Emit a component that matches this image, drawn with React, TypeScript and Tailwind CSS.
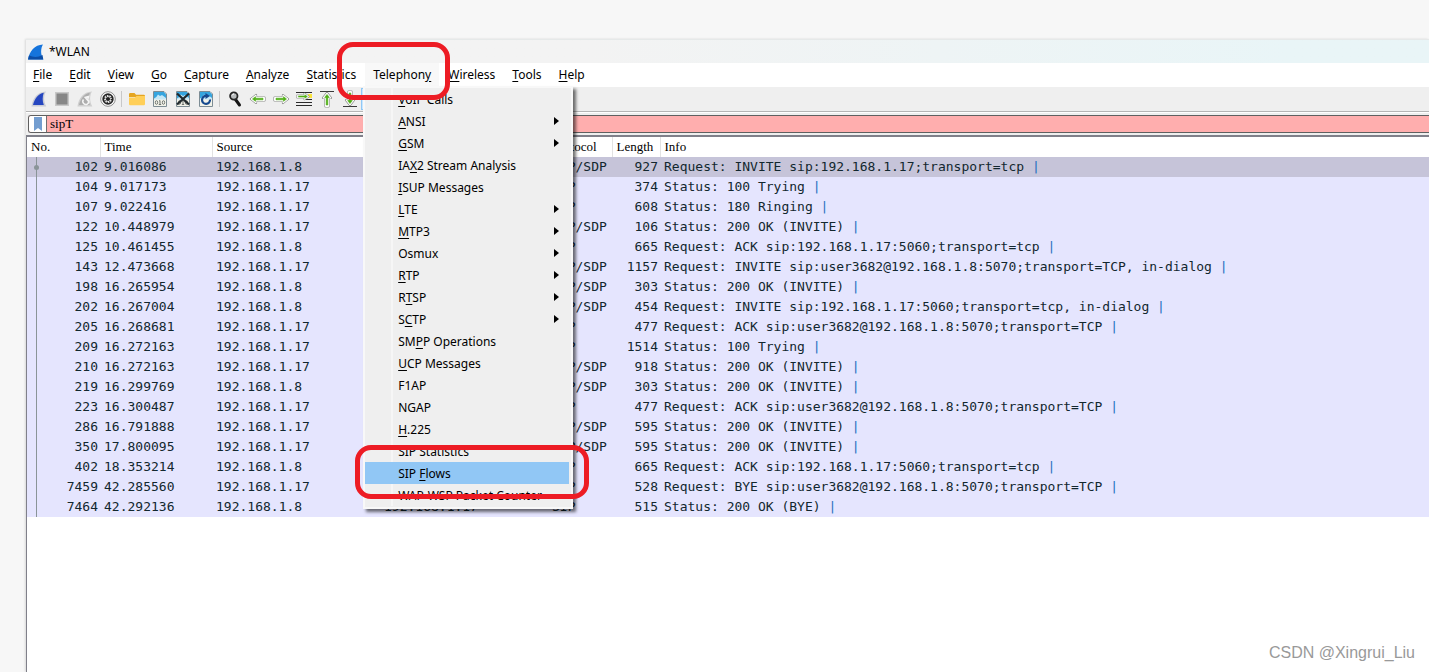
import { ReactNode } from "react";

const menus = [
  "&File",
  "&Edit",
  "&View",
  "&Go",
  "&Capture",
  "&Analyze",
  "&Statistics",
  "Telephon&y",
  "&Wireless",
  "&Tools",
  "&Help",
];

const telephonyItems = [
  { label: "&VoIP Calls" },
  { label: "&ANSI", submenu: true },
  { label: "&GSM", submenu: true },
  { label: "IA&X2 Stream Analysis" },
  { label: "&ISUP Messages" },
  { label: "&LTE", submenu: true },
  { label: "&MTP3", submenu: true },
  { label: "Osmux", submenu: true },
  { label: "&RTP", submenu: true },
  { label: "R&TSP", submenu: true },
  { label: "S&CTP", submenu: true },
  { label: "SM&PP Operations" },
  { label: "&UCP Messages" },
  { label: "F1AP" },
  { label: "NGAP" },
  { label: "&H.225" },
  { label: "SIP Statistics" },
  { label: "SIP &Flows", active: true },
  { label: "WAP-WSP Packet Counter" },
];

const A = "192.168.1.8";
const B = "192.168.1.17";

const packets = [
  [102, "9.016086", A, B, "SIP/SDP", 927, "Request: INVITE sip:192.168.1.17;transport=tcp"],
  [104, "9.017173", B, A, "SIP", 374, "Status: 100 Trying"],
  [107, "9.022416", B, A, "SIP", 608, "Status: 180 Ringing"],
  [122, "10.448979", B, A, "SIP/SDP", 106, "Status: 200 OK (INVITE)"],
  [125, "10.461455", A, B, "SIP", 665, "Request: ACK sip:192.168.1.17:5060;transport=tcp"],
  [143, "12.473668", B, A, "SIP/SDP", 1157, "Request: INVITE sip:user3682@192.168.1.8:5070;transport=TCP, in-dialog"],
  [198, "16.265954", A, B, "SIP/SDP", 303, "Status: 200 OK (INVITE)"],
  [202, "16.267004", A, B, "SIP/SDP", 454, "Request: INVITE sip:192.168.1.17:5060;transport=tcp, in-dialog"],
  [205, "16.268681", B, A, "SIP", 477, "Request: ACK sip:user3682@192.168.1.8:5070;transport=TCP"],
  [209, "16.272163", B, A, "SIP", 1514, "Status: 100 Trying"],
  [210, "16.272163", B, A, "SIP/SDP", 918, "Status: 200 OK (INVITE)"],
  [219, "16.299769", A, B, "SIP/SDP", 303, "Status: 200 OK (INVITE)"],
  [223, "16.300487", B, A, "SIP", 477, "Request: ACK sip:user3682@192.168.1.8:5070;transport=TCP"],
  [286, "16.791888", B, A, "SIP/SDP", 595, "Status: 200 OK (INVITE)"],
  [350, "17.800095", B, A, "SIP/SDP", 595, "Status: 200 OK (INVITE)"],
  [402, "18.353214", A, B, "SIP", 665, "Request: ACK sip:192.168.1.17:5060;transport=tcp"],
  [7459, "42.285560", B, A, "SIP", 528, "Request: BYE sip:user3682@192.168.1.8:5070;transport=TCP"],
  [7464, "42.292136", A, B, "SIP", 515, "Status: 200 OK (BYE)"],
];

// "&" marks the access key, as in Qt labels
function Mnemonic({ text }: { text: string }) {
  const i = text.indexOf("&");
  if (i < 0) return <span>{text}</span>;
  return (
    <span>
      {text.slice(0, i)}
      <span className="underline underline-offset-2">{text[i + 1]}</span>
      {text.slice(i + 2)}
    </span>
  );
}

function Icon({ children }: { children: ReactNode }) {
  return (
    <svg viewBox="0 0 16 16" className="size-4 overflow-visible">
      {children}
    </svg>
  );
}

function Page({ children }: { children: ReactNode }) {
  return (
    <Icon>
      <path d="M1.500.5H12L14.500 3v12.500h-13z" fill="#f3f3ea" stroke="#7d8c94" />
      <path d="M2 1h9.800L14 3.200V8H2z" fill="#35a5df" />
      <path d="M2 7.500Q5 6 6 3.500L8 5l2-1 4 3v1.500H2z" fill="#c4e7f6" />
      {children}
    </Icon>
  );
}

function Digits() {
  return (
    <g fill="none" stroke="#6f7470" strokeWidth="1">
      <ellipse cx="4.500" cy="11.500" rx="1.200" ry="1.800" />
      <path d="M7 10.200l1-.7v4M6.800 13.500h2.400" />
      <ellipse cx="11.500" cy="11.500" rx="1.200" ry="1.800" />
    </g>
  );
}

const arrow = "M1 8l5-4v2.500h8.500v3H6V12z";
const arrowHalo = (
  <>
    <path d={arrow} fill="#fff" stroke="#8f918e" strokeWidth="2.200" strokeLinejoin="round" />
    <path d={arrow} fill="#fff" stroke="#fff" strokeWidth="1" />
    <path d="M2.500 8L5.500 5.700v1.500H13v1.600H5.500v1.500z" fill="#4fae14" stroke="#4fae14" strokeWidth=".6" />
  </>
);

const toolbar: { name: string; sep?: boolean; icon: ReactNode }[] = [
  {
    name: "Start capture",
    icon: (
      <Icon>
        <path d="M.5 15.500C1.500 7 6.500 1 15 .5c-2.500 4-2.500 10 .3 15z" fill="#c9ccd6" />
        <path d="M2 14C3.500 8 7 3 12.800 1.800c-1.500 4-1.500 8.500 0 12.200z" fill="#2546c0" />
      </Icon>
    ),
  },
  {
    name: "Stop capture",
    icon: (
      <Icon>
        <path d="M1 1h14v14H1z" fill="#c8c8c8" />
        <path d="M2.500 2.500h11v11h-11z" fill="#878787" />
      </Icon>
    ),
  },
  {
    name: "Restart capture",
    icon: (
      <Icon>
        <path d="M.5 15.500C1.500 7 6.500 1 15 .5c-2.500 4-2.500 10 .3 15z" fill="#cfcfcf" />
        <path d="M2 14C3.500 8 7 3 12.800 1.800c-1.500 4-1.500 8.500 0 12.200z" fill="#adadad" />
        <path d="M6.500 8.500a3 3 0 1 0 5 .5M11.500 5.500L8.200 6.500l2.500 2.800z" fill="none" stroke="#f4f4f4" strokeWidth="1.500" />
      </Icon>
    ),
  },
  {
    name: "Capture options",
    sep: true,
    icon: (
      <Icon>
        <circle cx="8" cy="8" r="7.300" fill="#fff" stroke="#8e8e8e" strokeWidth="1" />
        <circle cx="8" cy="8" r="4.800" fill="#e6e6e6" stroke="#262626" strokeWidth="1.800" />
        <circle cx="8" cy="8" r="3.400" fill="none" stroke="#262626" strokeWidth="1.400" strokeDasharray="1.200 1.470" />
        <circle cx="8" cy="8" r="2.100" fill="#202020" />
      </Icon>
    ),
  },
  {
    name: "Open",
    icon: (
      <Icon>
        <path d="M0 3.200Q0 2 1.200 2h4.300L7 3.700h7.800q1.200 0 1.200 1.200V6H0z" fill="#e5a520" />
        <path d="M0 6.500h6L7.500 5H16v8q0 1.200-1.200 1.200H1.200Q0 14.200 0 13z" fill="#ffcf58" />
      </Icon>
    ),
  },
  { name: "Save", icon: <Page><Digits /></Page> },
  {
    name: "Close",
    icon: (
      <Page>
        <Digits />
        <path d="M2 2.500l12 11M14 2.500l-12 11" stroke="#20282c" strokeWidth="2.300" />
      </Page>
    ),
  },
  {
    name: "Reload",
    sep: true,
    icon: (
      <Page>
        <path d="M12 8.500A4 4 0 1 1 8.500 5" fill="none" stroke="#174a8f" strokeWidth="2.200" />
        <path d="M7.500 2l4.500 3-4.500 3z" fill="#174a8f" />
      </Page>
    ),
  },
  {
    name: "Find packet",
    icon: (
      <Icon>
        <path d="M8.500 8.500l4 5.500" stroke="#161616" strokeWidth="3" strokeLinecap="round" />
        <circle cx="6.800" cy="5" r="3.700" fill="#b9bcbd" stroke="#262626" strokeWidth="1.800" />
        <path d="M5 4.500q.6-1.500 2-1.600" stroke="#fff" fill="none" />
      </Icon>
    ),
  },
  { name: "Previous packet", icon: <Icon>{arrowHalo}</Icon> },
  {
    name: "Next packet",
    icon: (
      <Icon>
        <g transform="rotate(180 8 8)">{arrowHalo}</g>
      </Icon>
    ),
  },
  {
    name: "Go to packet",
    icon: (
      <Icon>
        <path d="M0 1.500h16M0 11.500h16M0 14.500h16M9 8.500h7" stroke="#2b2b2b" />
        <path d="M12 3h4v4h-4z" fill="#fbe43b" />
        <g transform="translate(13.500 -.5) scale(-.85 .75)">{arrowHalo}</g>
      </Icon>
    ),
  },
  {
    name: "First packet",
    icon: (
      <Icon>
        <path d="M1 .5h14" stroke="#3a3a3a" />
        <g transform="translate(0 1) rotate(90 8 8)">{arrowHalo}</g>
      </Icon>
    ),
  },
  {
    name: "Last packet",
    icon: (
      <Icon>
        <path d="M1 15.500h14" stroke="#3a3a3a" />
        <g transform="translate(0 -1) rotate(-90 8 8)">{arrowHalo}</g>
      </Icon>
    ),
  },
];

function TelephonyMenu() {
  return (
    <ul className="absolute -left-[2px] top-full z-10 w-[210px] border-2 border-[#f8f8f8] bg-[#efefef] pb-px shadow-[3px_3px_3px_rgba(0,0,0,0.55)]">
      {telephonyItems.map((item) => (
        <li key={item.label}>
          <button
            className={
              item.active
                ? "flex h-[22px] w-[204px] items-center bg-[#91c7f5]"
                : "flex h-[22px] w-full items-center"
            }
          >
            <span
              className={
                item.active
                  ? "mr-[5px] h-full w-7 shrink-0"
                  : "mr-[5px] h-full w-7 shrink-0 border-r-2 border-[#f6f6f6]"
              }
            />
            <span className="pt-[2px]">
              <Mnemonic text={item.label} />
            </span>
            {item.submenu && (
              <svg viewBox="0 0 5 8" className="ml-auto mr-[12px] h-2 w-[5px]">
                <path d="M0 0l5 4-5 4z" fill="#000" />
              </svg>
            )}
          </button>
        </li>
      ))}
    </ul>
  );
}

function MenuBar() {
  return (
    <nav className="flex h-[23px] items-stretch gap-px bg-white">
      {menus.map((label) =>
        label === "Telephon&y" ? (
          <div key={label} className="relative bg-[#f8f8f8]">
            <button className="h-full px-2">
              <Mnemonic text={label} />
            </button>
            <TelephonyMenu />
          </div>
        ) : (
          <button key={label} className="px-2 first:pl-[7px]">
            <Mnemonic text={label} />
          </button>
        )
      )}
    </nav>
  );
}

function Toolbar() {
  return (
    <div className="flex h-[26px] items-center border-b border-t border-b-[#b5b5b5] border-t-white bg-[#efefef] pl-[1px]">
      {toolbar.map((tool) => (
        <div key={tool.name} className="flex items-center">
          <button aria-label={tool.name} className="flex w-[23px] justify-center">
            {tool.icon}
          </button>
          {tool.sep && <span className="mx-[2px] h-4 w-[2px] border-l border-[#c8c8c8]" />}
        </div>
      ))}
      <button aria-label="Auto scroll" className="h-[22px] w-[23px] border border-[#90c8f6] bg-[#cce8ff]" />
    </div>
  );
}

function FilterBar() {
  return (
    <div className="border-t border-white bg-[#efefef] pb-[2px] pl-[2px] pt-[2px]">
      <div className="flex h-[18px] overflow-hidden rounded-l-[3px] border-y border-l border-[#606060] bg-[#ffaeae]">
        <button
          aria-label="Filter bookmarks"
          className="flex w-[18px] shrink-0 items-center justify-center border-r border-[#707070] bg-white"
        >
          <svg viewBox="0 0 8 14" className="h-[14px] w-2">
            <path d="M0 0h8v14l-4-3-4 3z" fill="#739dd0" />
          </svg>
        </button>
        <input
          aria-label="Display filter"
          defaultValue="sipT"
          className="min-w-0 flex-1 bg-transparent pl-[3px] font-['Liberation_Serif',serif] text-[13px] text-black outline-none"
        />
      </div>
    </div>
  );
}

function PacketList() {
  const th = "border-r border-[#e2e2e2] pl-[4px] text-left font-normal";
  return (
    <table className="w-full table-fixed border-collapse font-['DejaVu_Sans_Mono',monospace] text-[13px] text-[#12272e]">
      <colgroup>
        <col className="w-[9px]" />
        <col className="w-[64px]" />
        <col className="w-[112px]" />
        <col className="w-[168px]" />
        <col className="w-[168px]" />
        <col className="w-[64px]" />
        <col className="w-[48px]" />
        <col />
      </colgroup>
      <thead>
        <tr className="h-5 bg-white font-['Liberation_Serif',serif] text-[13px] leading-5 text-black">
          <th colSpan={2} className={th}>No.</th>
          <th className={th}>Time</th>
          <th className={th}>Source</th>
          <th className={th}>Destination</th>
          <th className={th}>Protocol</th>
          <th className={th}>Length</th>
          <th className="pl-[4px] text-left font-normal">Info</th>
        </tr>
      </thead>
      <tbody>
        {packets.map(([no, time, src, dst, proto, len, info], i) => (
          <tr key={no} className={i === 0 ? "h-5 bg-[#c6c4d9]" : "h-5 bg-[#e5e5fe]"}>
            <td className="relative border-r border-[#8a9498] p-0">
              {i === 0 && (
                <span className="absolute -right-[3px] top-2 size-[5px] rounded-full bg-[#8a9498]" />
              )}
            </td>
            <td className="p-0 pr-[2px] text-right leading-5">{no}</td>
            <td className="p-0 pl-[4px] leading-5">{time}</td>
            <td className="p-0 pl-[4px] leading-5">{src}</td>
            <td className="p-0 pl-[4px] leading-5">{dst}</td>
            <td className="p-0 pl-[4px] leading-5">{proto}</td>
            <td className="p-0 pr-[2px] text-right leading-5">{len}</td>
            <td className="truncate p-0 pl-[4px] leading-5">
              {info} <span className="text-[#1f6fc0]">|</span>
            </td>
          </tr>
        ))}
      </tbody>
    </table>
  );
}

export default function App() {
  return (
    <div className="relative flex min-h-screen flex-col overflow-hidden bg-[#f7f7f7] pl-[26px] pt-[39px] font-['Noto_Sans','Open_Sans',sans-serif] text-[12px] text-black">
      <div className="flex flex-1 flex-col bg-white shadow-[-1px_0_2px_rgba(0,0,0,0.12)]">
        <header className="flex h-6 items-center border-t border-[#e6e9e9] bg-linear-to-r from-[#f3f3f3] from-40% to-[#e9f5f7] to-90% pl-[2px]">
          <svg viewBox="0 0 16 16" className="mr-[5px] size-4">
            <path d="M0 15.500C1.500 7 6.500 1 15 .5c-2.500 4-2.500 10 .3 15z" fill="#1674dc" />
            <path d="M0 15.500l1-4q7 3 13.500-.5l.8 4.500z" fill="#0c4da6" />
          </svg>
          *WLAN
        </header>
        <MenuBar />
        <Toolbar />
        <FilterBar />
        <main className="flex-1 border-l border-t-2 border-[#80808a]">
          <PacketList />
        </main>
      </div>

      <div className="absolute left-[337px] top-[42px] z-20 h-[58px] w-[113px] rounded-[16px] border-[5px] border-[#ed1c24]" />
      <div className="absolute left-[355px] top-[445px] z-20 h-[54px] w-[234px] rounded-[16px] border-[5px] border-[#ed1c24]" />

      <p className="absolute bottom-[7px] right-[14px] font-['Liberation_Sans',sans-serif] text-[16px] text-[#999]">
        CSDN @Xingrui_Liu
      </p>
    </div>
  );
}
